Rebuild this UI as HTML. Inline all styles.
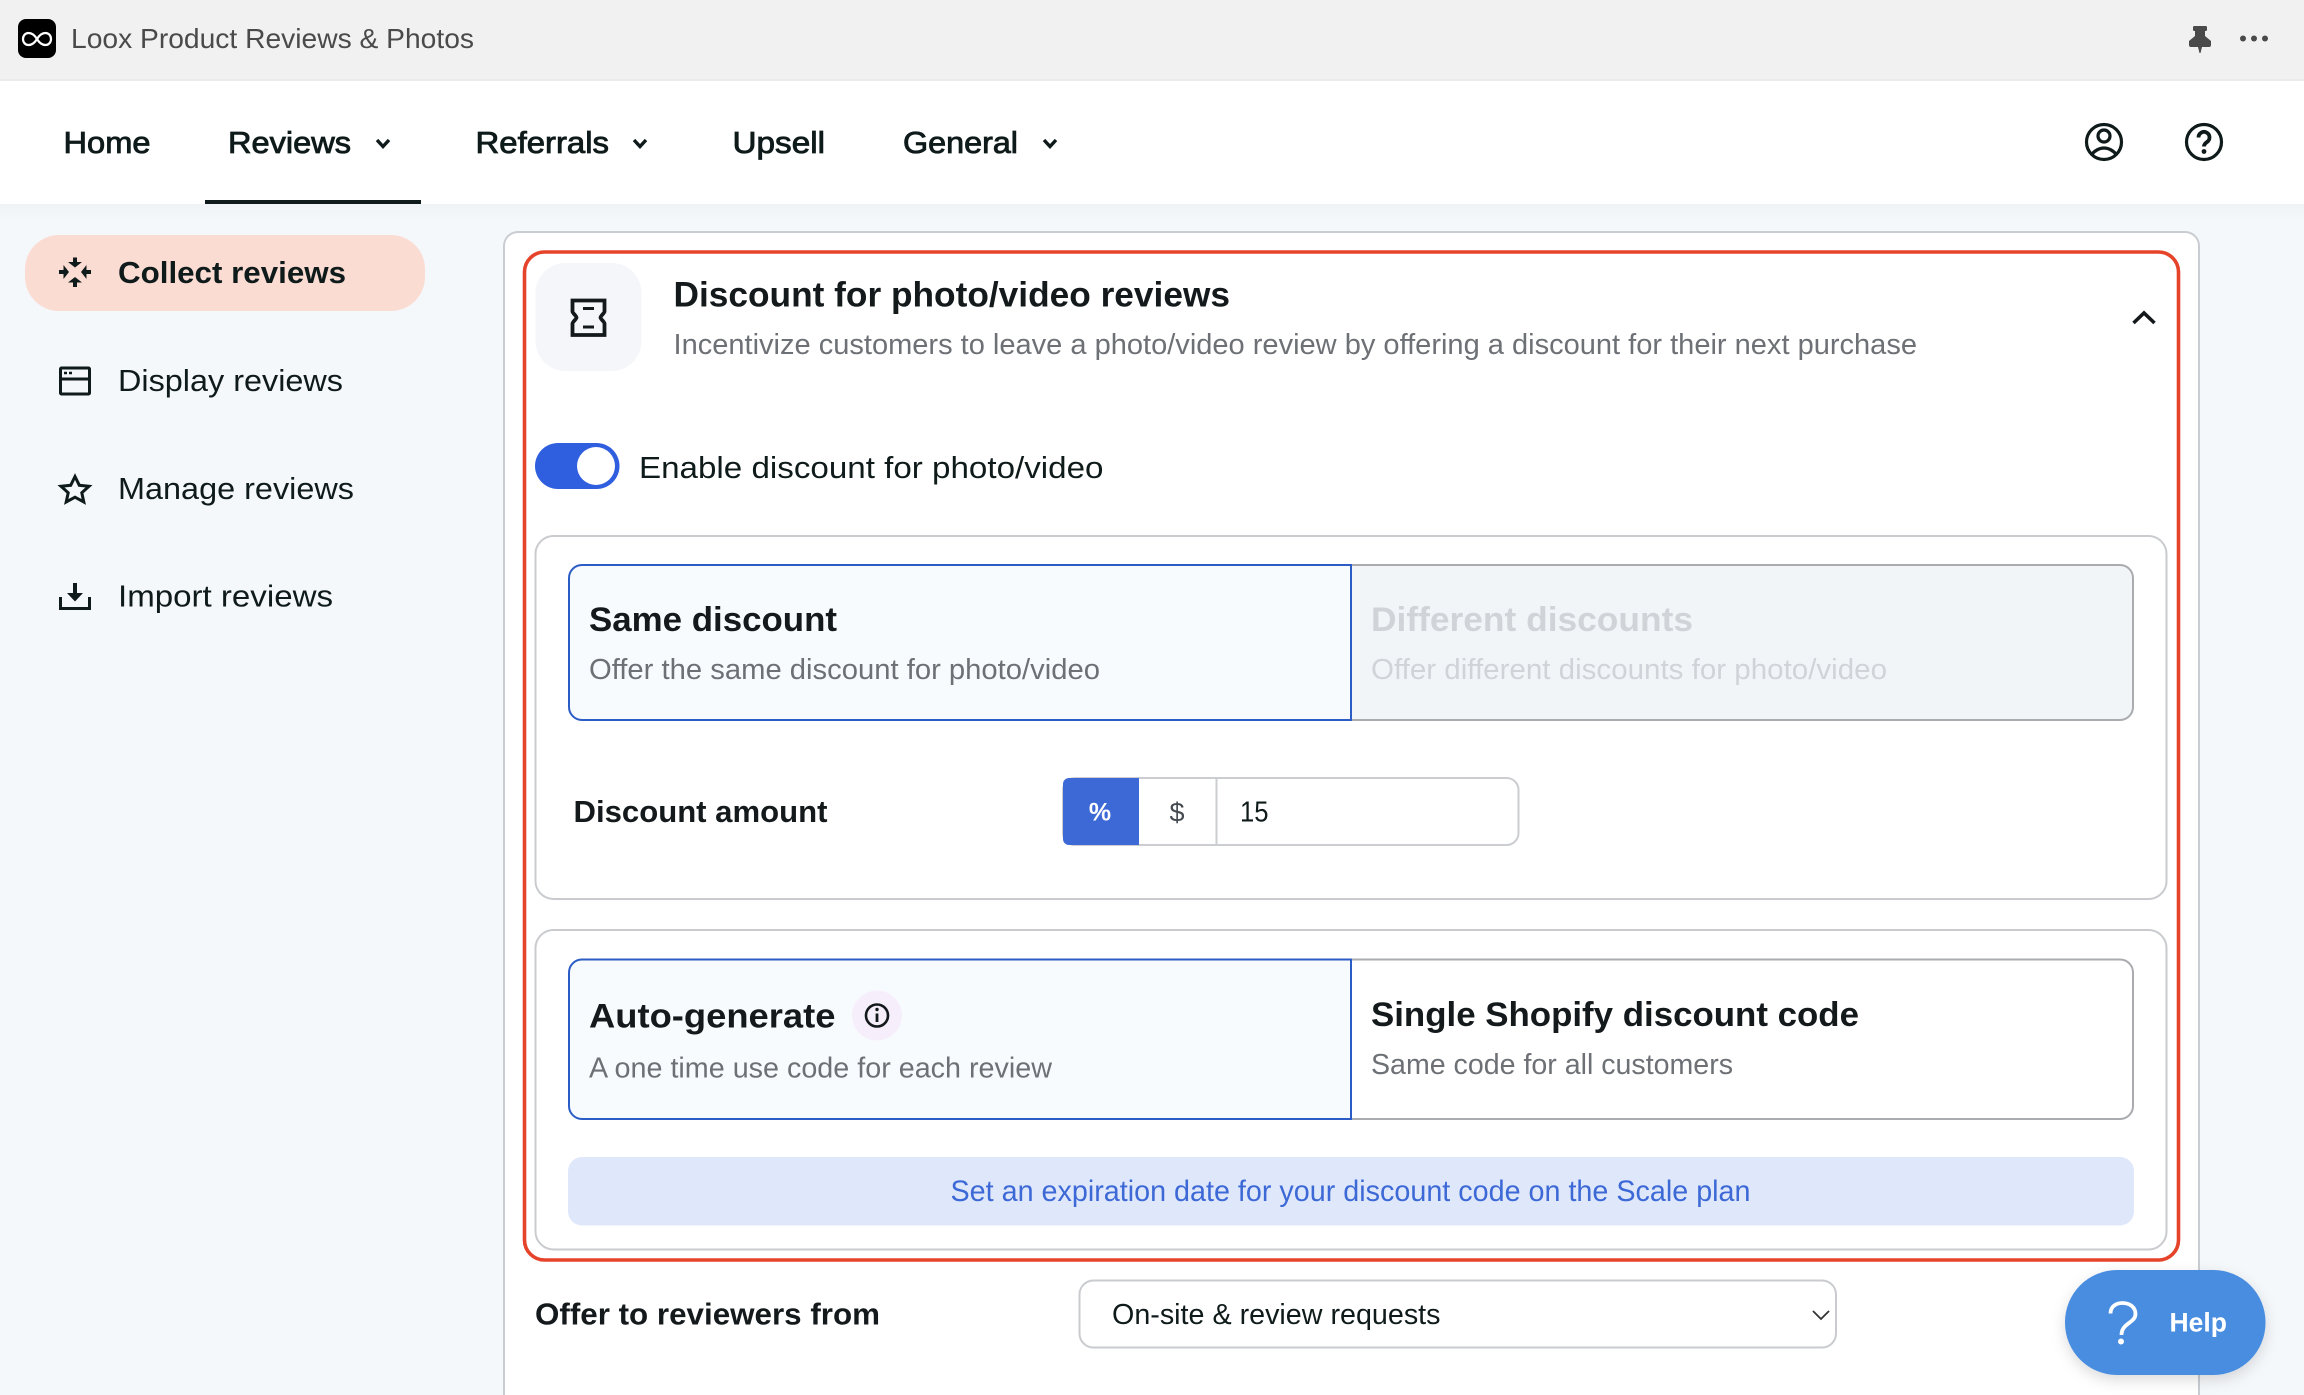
<!DOCTYPE html>
<html lang="en">
<head>
<meta charset="utf-8">
<title>Loox Product Reviews &amp; Photos</title>
<style>
html,body{margin:0;padding:0;background:#f5f8fb;width:2304px;height:1395px;overflow:hidden}
svg{display:block}
text{font-family:"Liberation Sans",sans-serif;white-space:pre}
.d{fill:#0f1a1a}
.m{stroke:#0f1a1a;stroke-width:.85px;fill:#0f1a1a}
.b{font-weight:700;fill:#14191c}
.g{fill:#6d7175}
</style>
</head>
<body>
<svg width="2304" height="1395" viewBox="0 0 2304 1395" xmlns="http://www.w3.org/2000/svg">
<defs>
<linearGradient id="band" x1="0" y1="0" x2="0" y2="1"><stop offset="0" stop-color="#eff3f6"/><stop offset="1" stop-color="#f5f8fb"/></linearGradient>
<filter id="sh" x="-20%" y="-20%" width="140%" height="150%"><feDropShadow dx="0" dy="5" stdDeviation="7" flood-color="#000" flood-opacity=".14"/></filter>
</defs>
<rect width="2304" height="1395" fill="#f5f8fb"/>
<rect y="204" width="2304" height="18" fill="url(#band)"/>

<!-- top bar -->
<rect width="2304" height="79" fill="#f1f1f1"/>
<rect y="79" width="2304" height="2" fill="#ebebeb"/>
<rect x="18" y="19" width="38" height="39" rx="8" fill="#000"/>
<path d="M37 39C34 34 31 33 28.5 33C25 33 23 36 23 39C23 42 25 45 28.5 45C31 45 34 44 37 39C40 34 43 33 45.5 33C49 33 51 36 51 39C51 42 49 45 45.5 45C43 45 40 44 37 39Z" fill="none" stroke="#fff" stroke-width="2.2"/>
<text x="71" y="48" font-size="27.5" fill="#4a4a4a" textLength="403" lengthAdjust="spacingAndGlyphs">Loox Product Reviews &amp; Photos</text>
<path d="M2194 26H2206Q2207 26 2207 28V30Q2207 31 2205 31V36L2211 41V45Q2211 47 2209 47H2202L2200.5 53H2199.5L2198 47H2191Q2189 47 2189 45V41L2195 36V31Q2193 31 2193 30V28Q2193 26 2194 26Z" fill="#4a4a4a"/>
<circle cx="2243" cy="38.500" r="3" fill="#4a4a4a"/><circle cx="2254" cy="38.500" r="3" fill="#4a4a4a"/><circle cx="2265" cy="38.500" r="3" fill="#4a4a4a"/>

<!-- nav -->
<rect y="81" width="2304" height="123" fill="#fff"/>
<text class="m" x="63.500" y="153" font-size="30.500" textLength="87" lengthAdjust="spacingAndGlyphs">Home</text>
<text class="m" x="228" y="153" font-size="30.500" textLength="123" lengthAdjust="spacingAndGlyphs">Reviews</text>
<text class="m" x="475.500" y="153" font-size="30.500" textLength="133.500" lengthAdjust="spacingAndGlyphs">Referrals</text>
<text class="m" x="732.500" y="153" font-size="30.500" textLength="92.500" lengthAdjust="spacingAndGlyphs">Upsell</text>
<text class="m" x="903" y="153" font-size="30.500" textLength="115" lengthAdjust="spacingAndGlyphs">General</text>
<g fill="none" stroke="#0f1a1a" stroke-width="3.4">
<path d="M377 140L383 146.500L389 140"/>
<path d="M634 140L640 146.500L646 140"/>
<path d="M1044 140L1050 146.500L1056 140"/>
</g>
<rect x="205" y="200" width="216" height="4" fill="#0f1a1a"/>
<g fill="none" stroke="#0f1a1a" stroke-width="3.2">
<circle cx="2104" cy="142" r="17.500"/>
<circle cx="2104" cy="136" r="6"/>
<path d="M2091 155Q2097 148 2104 148Q2111 148 2117 155"/>
<circle cx="2204" cy="142" r="17.500"/>
<path d="M2198.500 137.500a5.500 5.500 0 1 1 8.500 4.500q-3 2-3 4.500" stroke-width="3.800"/>
</g>
<circle cx="2204" cy="151.500" r="2.400" fill="#0f1a1a"/>

<!-- sidebar -->
<rect x="25" y="235" width="400" height="76" rx="34" fill="#fbdcd3"/>
<g fill="#0f1a1a">
<path d="M73 257.500h4v4.500h5l-7 5.500-7-5.500h5z"/>
<path d="M73 287h-0v-4.500h-5l7-5.500 7 5.500h-5v4.500z"/>
<path d="M59 270v4h4.500v5l5.500-7-5.500-7v5z"/>
<path d="M91 270v4h-4.500v5l-5.500-7 5.500-7v5z"/>
</g>
<text class="b" x="118" y="283" font-size="30.500" style="fill:#0f1a1a" textLength="228" lengthAdjust="spacingAndGlyphs">Collect reviews</text>
<text class="d" x="118" y="391" font-size="30.500" textLength="225" lengthAdjust="spacingAndGlyphs">Display reviews</text>
<text class="d" x="118" y="499" font-size="30.500" textLength="236" lengthAdjust="spacingAndGlyphs">Manage reviews</text>
<text class="d" x="118" y="606.500" font-size="30.500" textLength="215" lengthAdjust="spacingAndGlyphs">Import reviews</text>
<g fill="none" stroke="#0f1a1a" stroke-width="3">
<rect x="60.500" y="368" width="29" height="26" rx="1"/>
<path d="M60 379H90"/>
<path d="M64 373h3M69 373h3" stroke-width="2.400"/>
<path d="M75 476.500L79.300 485.300L89 486.300L81.800 492.800L83.800 502L75 497.200L66.200 502L68.200 492.800L61 486.300L70.700 485.300Z" stroke-linejoin="miter"/>
<path d="M60.500 597V608.500H89.500V597"/>
</g>
<path d="M73 583h4v10h6l-8 8.500-8-8.500h6z" fill="#0f1a1a"/>

<!-- main card -->
<rect x="504" y="232" width="1695" height="1170" rx="14" fill="#fff" style="display:none"/>
<path d="M504 1395V246a14 14 0 0 1 14-14H2185a14 14 0 0 1 14 14V1395" fill="#fff" stroke="#c9cdd2" stroke-width="2"/>
<rect x="524.500" y="252" width="1654" height="1008" rx="20" fill="#fff" stroke="#e5432a" stroke-width="3.600"/>

<!-- header -->
<rect x="535.500" y="263" width="106" height="108" rx="30" fill="#f4f6f9"/>
<path d="M572.500 300.500H604.500V311.500C604.500 313 600.500 316 600.500 317.500C600.500 319 604.500 322 604.500 323.500V335H572.500V323.500C572.500 322 576.500 319 576.500 317.500C576.500 316 572.500 313 572.500 311.500Z" fill="none" stroke="#14191c" stroke-width="3.800"/>
<path d="M583 308.500H594M583 327H594" stroke="#14191c" stroke-width="3"/>
<text class="b" x="673.500" y="306.500" font-size="35" textLength="556.500" lengthAdjust="spacingAndGlyphs">Discount for photo/video reviews</text>
<text class="g" x="673.500" y="354" font-size="28.500" textLength="1243.500" lengthAdjust="spacingAndGlyphs">Incentivize customers to leave a photo/video review by offering a discount for their next purchase</text>
<path d="M2133.500 323L2144 313L2154.500 323" fill="none" stroke="#14191c" stroke-width="3.600"/>

<!-- toggle -->
<rect x="535" y="443" width="84.500" height="46" rx="23" fill="#2f5fde"/>
<circle cx="596" cy="466" r="19" fill="#fff"/>
<text class="d" x="639" y="478" font-size="30.500" textLength="464.500" lengthAdjust="spacingAndGlyphs">Enable discount for photo/video</text>

<!-- box 1 -->
<rect x="535.500" y="536" width="1631" height="363" rx="18" fill="#fff" stroke="#c9cbcf" stroke-width="2"/>
<path d="M1351 565H2120a13 13 0 0 1 13 13V707a13 13 0 0 1-13 13H1351Z" fill="#f2f5f8" stroke="#a9abae" stroke-width="2"/>
<path d="M1351 565H582a13 13 0 0 0-13 13V707a13 13 0 0 0 13 13H1351Z" fill="#f8fbfe" stroke="#2c5cc5" stroke-width="2"/>
<text class="b" x="589" y="631" font-size="34" textLength="248" lengthAdjust="spacingAndGlyphs">Same discount</text>
<text class="g" x="589" y="679" font-size="28.500" textLength="511" lengthAdjust="spacingAndGlyphs">Offer the same discount for photo/video</text>
<text class="b" x="1371" y="631" font-size="34" style="fill:#d0d4d8" textLength="322" lengthAdjust="spacingAndGlyphs">Different discounts</text>
<text x="1371" y="679" font-size="28.500" fill="#d0d4d8" textLength="516" lengthAdjust="spacingAndGlyphs">Offer different discounts for photo/video</text>

<text class="b" x="573.500" y="822" font-size="30.500" textLength="254" lengthAdjust="spacingAndGlyphs">Discount amount</text>
<rect x="1063" y="778" width="455.500" height="67" rx="12" fill="#fff" stroke="#cbcdd1" stroke-width="2"/>
<path d="M1069 778H1139V845H1069a6 6 0 0 1-6-6V784a6 6 0 0 1 6-6Z" fill="#3d69d6"/>
<path d="M1216.500 778V845" stroke="#cbcdd1" stroke-width="2"/>
<text x="1100" y="820.500" font-size="25" font-weight="700" fill="#fff" text-anchor="middle">%</text>
<text x="1177" y="821.500" font-size="27" fill="#444a4f" text-anchor="middle">$</text>
<text class="d" x="1240" y="821.500" font-size="29" textLength="28.500" lengthAdjust="spacingAndGlyphs">15</text>

<!-- box 2 -->
<rect x="535.500" y="930" width="1631" height="319.500" rx="18" fill="#fff" stroke="#c9cbcf" stroke-width="2"/>
<path d="M1351 959.500H2120a13 13 0 0 1 13 13V1106a13 13 0 0 1-13 13H1351Z" fill="#fff" stroke="#a9abae" stroke-width="2"/>
<path d="M1351 959.500H582a13 13 0 0 0-13 13V1106a13 13 0 0 0 13 13H1351Z" fill="#f8fbfe" stroke="#2c5cc5" stroke-width="2"/>
<text class="b" x="589" y="1027.500" font-size="34" textLength="246.500" lengthAdjust="spacingAndGlyphs">Auto-generate</text>
<circle cx="877" cy="1015.500" r="25" fill="#f6effb"/>
<circle cx="877" cy="1015.500" r="11" fill="none" stroke="#14191c" stroke-width="2.600"/>
<path d="M877 1013.500V1022" stroke="#14191c" stroke-width="2.800"/>
<circle cx="877" cy="1009.500" r="1.700" fill="#14191c"/>
<text class="g" x="589" y="1077.500" font-size="28.500" textLength="463" lengthAdjust="spacingAndGlyphs">A one time use code for each review</text>
<text class="b" x="1371" y="1026" font-size="34" textLength="488" lengthAdjust="spacingAndGlyphs">Single Shopify discount code</text>
<text class="g" x="1371" y="1074" font-size="28.500" textLength="362" lengthAdjust="spacingAndGlyphs">Same code for all customers</text>
<rect x="568" y="1157" width="1566" height="68.500" rx="14" fill="#dfe8fb"/>
<text x="950.500" y="1201" font-size="29.500" fill="#3d69d6" textLength="800" lengthAdjust="spacingAndGlyphs">Set an expiration date for your discount code on the Scale plan</text>

<!-- offer row -->
<text class="b" x="535" y="1324.500" font-size="30.500" textLength="345" lengthAdjust="spacingAndGlyphs">Offer to reviewers from</text>
<rect x="1079.500" y="1280.500" width="756.500" height="67" rx="14" fill="#fff" stroke="#c9cbcf" stroke-width="2"/>
<text class="d" x="1112" y="1324" font-size="29" textLength="328.500" lengthAdjust="spacingAndGlyphs">On-site &amp; review requests</text>
<path d="M1813 1311L1821 1319L1829 1311" fill="none" stroke="#333" stroke-width="1.800"/>

<!-- help -->
<rect x="2065" y="1270" width="200.500" height="105" rx="52" fill="#4a8de0" filter="url(#sh)"/>
<path d="M2110.500 1313.500C2110.500 1306.500 2116 1303 2122.500 1303C2129.500 1303 2135.500 1307 2135.500 1314C2135.500 1323 2121.500 1323 2121.500 1335" fill="none" stroke="#fff" stroke-width="3.800"/>
<circle cx="2121" cy="1341.500" r="3" fill="#fff"/>
<text x="2169.500" y="1331.500" font-size="27" font-weight="700" fill="#fff" textLength="57.500" lengthAdjust="spacingAndGlyphs">Help</text>
</svg>
</body>
</html>
